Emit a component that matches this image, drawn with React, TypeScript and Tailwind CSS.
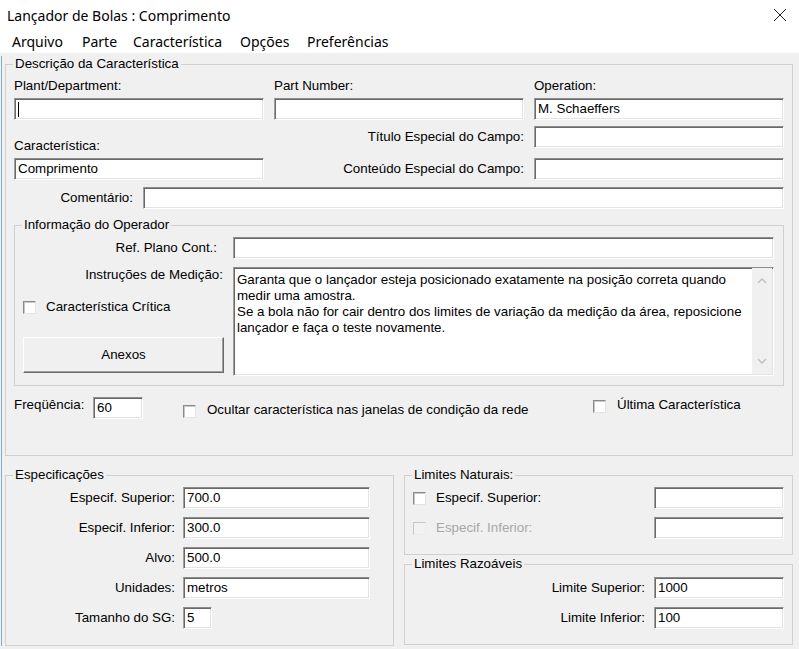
import React from 'react';

const body = "font-['Liberation_Sans',Arial,sans-serif] text-[13.33px] leading-[16px] text-black";

function Input({ value = '', className = '', caret = false }: { value?: string; className?: string; caret?: boolean }) {
	return (
		<div
			className={`flex h-[22px] shrink-0 items-center overflow-hidden whitespace-nowrap border border-t-[#8c8c8c] border-l-[#a0a0a0] border-b-white border-r-white bg-white pl-[3px] shadow-[inset_1px_1px_0_#696969,inset_-1px_-1px_0_#e3e3e3] ${className}`}
		>
			{caret && <span className="h-[15px] w-px bg-black" />}
			{value}
		</div>
	);
}

function Box({ disabled = false }: { disabled?: boolean }) {
	return (
		<span
			className={`block h-[13px] w-[13px] shrink-0 border ${
				disabled
					? 'border-[#c8c8c8] border-b-[#ececec] border-r-[#ececec] bg-[#f2f2f2]'
					: 'border-[#8a8a8a] border-b-[#e3e3e3] border-r-[#e3e3e3] bg-white shadow-[inset_1px_1px_0_#c8c8c8]'
			}`}
		/>
	);
}

function Group({ title, className = '', children }: { title: string; className?: string; children?: React.ReactNode }) {
	return (
		<fieldset className={`border border-[#d0d0d0] ${className}`}>
			<legend className="ml-[7px] px-[2px] leading-[16px]">{title}</legend>
			{children}
		</fieldset>
	);
}

const specs: [string, string, string][] = [
	['Especif. Superior:', '700.0', 'w-[187px]'],
	['Especif. Inferior:', '300.0', 'w-[187px]'],
	['Alvo:', '500.0', 'w-[187px]'],
	['Unidades:', 'metros', 'w-[187px]'],
	['Tamanho do SG:', '5', 'w-[29px]'],
];

export default function App() {
	return (
		<div className="relative h-[649px] w-[799px] overflow-hidden bg-[#f0f0f0]">
			{/* Title bar */}
			<div className="flex h-[30px] items-center justify-between bg-white pl-[7px] pr-[12px] font-['Noto_Sans',sans-serif] text-[14px] text-black">
				<span>Lançador de Bolas : Comprimento</span>
				<svg width="14" height="14" viewBox="0 0 14 14">
					<path d="M1 1L13 13M13 1L1 13" stroke="#222" strokeWidth="1" />
				</svg>
			</div>

			{/* Menu */}
			<div className="flex h-[23px] items-center bg-white pl-[12px] font-['Noto_Sans',sans-serif] text-[14px] text-black">
				<span className="w-[70px]">Arquivo</span>
				<span className="w-[51px]">Parte</span>
				<span className="w-[107px]">Característica</span>
				<span className="w-[67px]">Opções</span>
				<span>Preferências</span>
			</div>

			<div className={`${body} relative`}>
				<span className="absolute bottom-0 left-[1px] top-0 w-px bg-[#7fb0cf]" />

				{/* Descrição da Característica */}
				<Group title="Descrição da Característica" className="ml-[5px] mt-[3px] h-[400px] w-[788px]">
					<div className="px-[8px] pt-[6px]">
						<div className="grid grid-cols-3 gap-x-[10px]">
							<div>
								<div>Plant/Department:</div>
								<Input className="mt-[4px]" caret />
							</div>
							<div>
								<div>Part Number:</div>
								<Input className="mt-[4px]" />
							</div>
							<div>
								<div>Operation:</div>
								<Input className="mt-[4px]" value="M. Schaeffers" />
							</div>
						</div>

						<div className="mt-[6px] flex">
							<div className="w-[250px] pt-[12px]">
								<div>Característica:</div>
								<Input className="mt-[4px]" value="Comprimento" />
							</div>
							<div className="ml-[10px] flex flex-1 flex-col gap-[10px]">
								<div className="flex items-center justify-end gap-[10px]">
									<span>Título Especial do Campo:</span>
									<Input className="w-[250px]" />
								</div>
								<div className="flex items-center justify-end gap-[10px]">
									<span>Conteúdo Especial do Campo:</span>
									<Input className="w-[250px]" />
								</div>
							</div>
						</div>

						<div className="mt-[7px] flex items-center">
							<span className="w-[119px] text-right">Comentário:</span>
							<Input className="ml-[10px] flex-1" />
						</div>

						{/* Informação do Operador */}
						<Group title="Informação do Operador" className="mt-[8px] w-full">
							<div className="flex gap-[10px] pb-[9px] pl-[8px] pr-[9px] pt-[4px]">
								<div className="flex w-[200px] flex-col">
									<div className="flex h-[22px] items-center justify-end pr-[6px]">Ref. Plano Cont.:</div>
									<div className="mt-[8px] text-right">Instruções de Medição:</div>
									<div className="mt-[16px] flex h-[16px] items-center gap-[10px]">
										<Box />
										<span>Característica Crítica</span>
									</div>
									<button className="mt-[22px] h-[36px] w-[201px] border border-b-[#696969] border-l-white border-r-[#696969] border-t-white bg-[#f0f0f0] shadow-[inset_-1px_-1px_0_#a0a0a0]">
										Anexos
									</button>
								</div>
								<div className="flex w-[541px] flex-col">
									<Input />
									<div className="mt-[8px] flex h-[109px] border border-b-white border-l-[#a0a0a0] border-r-white border-t-[#8c8c8c] bg-white shadow-[inset_1px_1px_0_#696969,inset_-1px_-1px_0_#e3e3e3]">
										<div className="flex-1 whitespace-nowrap pl-[3px] pt-[4px]">
											<div>Garanta que o lançador esteja posicionado exatamente na posição correta quando</div>
											<div>medir uma amostra.</div>
											<div>Se a bola não for cair dentro dos limites de variação da medição da área, reposicione</div>
											<div>lançador e faça o teste novamente.</div>
										</div>
										<div className="mb-px mr-px flex w-[20px] flex-col items-center justify-between bg-[#f0f0f0] py-[10px]">
											<svg width="10" height="6" viewBox="0 0 10 6">
												<path d="M1 5L5 1L9 5" fill="none" stroke="#c2c2c2" strokeWidth="1.5" />
											</svg>
											<svg width="10" height="6" viewBox="0 0 10 6">
												<path d="M1 1L5 5L9 1" fill="none" stroke="#c2c2c2" strokeWidth="1.5" />
											</svg>
										</div>
									</div>
								</div>
							</div>
						</Group>

						<div className="mt-[11px] flex items-start">
							<span className="w-[79px]">Freqüência:</span>
							<Input className="w-[50px]" value="60" />
							<div className="ml-[40px] flex w-[410px] items-start">
								<span className="mt-[8px]">
									<Box />
								</span>
								<span className="ml-[11px] mt-[5px]">Ocultar característica nas janelas de condição da rede</span>
							</div>
							<span className="mt-[3px]">
								<Box />
							</span>
							<span className="ml-[11px]">Última Característica</span>
						</div>
					</div>
				</Group>

				{/* Bottom groups */}
				<div className="mt-[11px] flex">
					<Group title="Especificações" className="ml-[5px] h-[179px] w-[389px]">
						<div className="flex flex-col gap-[8px] pt-[4px]">
							{specs.map(([label, value, w]) => (
								<div key={label} className="flex items-center">
									<span className="w-[169px] text-right">{label}</span>
									<Input className={`ml-[8px] ${w}`} value={value} />
								</div>
							))}
						</div>
					</Group>

					<div className="ml-[10px] flex flex-col">
						<Group title="Limites Naturais:" className="h-[88px] w-[389px]">
							<div className="flex flex-col gap-[8px] px-[8px] pt-[4px]">
								<div className="flex items-center">
									<Box />
									<span className="ml-[10px]">Especif. Superior:</span>
									<Input className="ml-auto w-[130px]" />
								</div>
								<div className="flex items-center">
									<Box disabled />
									<span className="ml-[10px] text-[#a8a8a8]">Especif. Inferior:</span>
									<Input className="ml-auto w-[130px]" />
								</div>
							</div>
						</Group>
						<Group title="Limites Razoáveis" className="mt-[1px] h-[89px] w-[389px]">
							<div className="flex flex-col gap-[8px] pr-[8px] pt-[5px]">
								<div className="flex items-center justify-end gap-[9px]">
									<span>Limite Superior:</span>
									<Input className="w-[130px]" value="1000" />
								</div>
								<div className="flex items-center justify-end gap-[9px]">
									<span>Limite Inferior:</span>
									<Input className="w-[130px]" value="100" />
								</div>
							</div>
						</Group>
					</div>
				</div>
			</div>
		</div>
	);
}
